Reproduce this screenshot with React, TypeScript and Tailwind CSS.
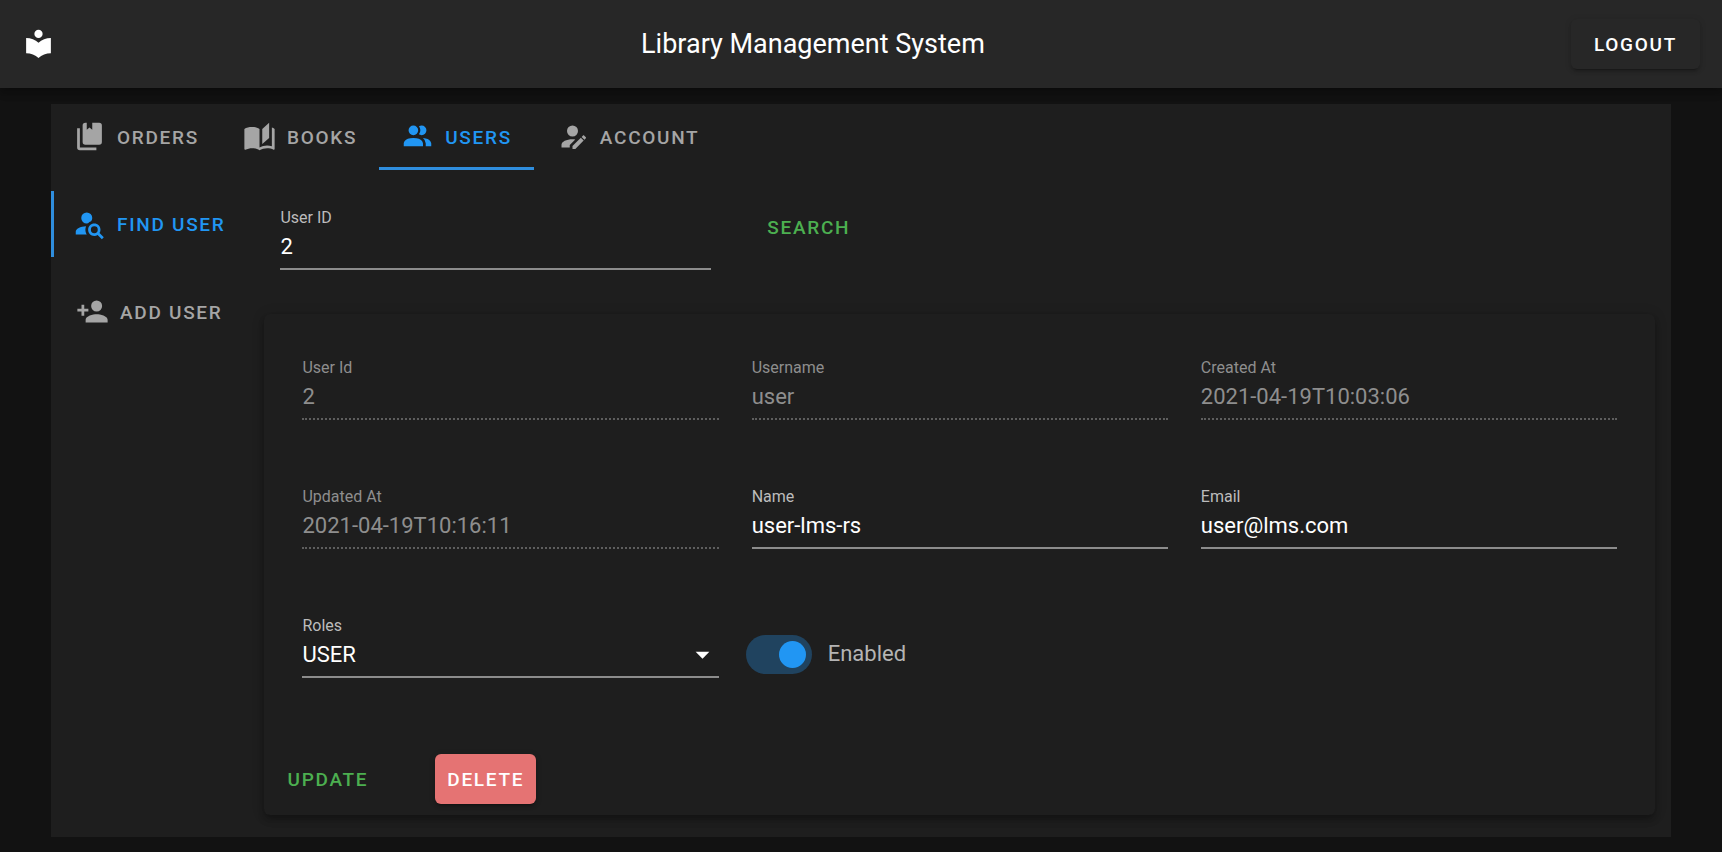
import { useState, type ReactNode } from "react";

const icons = {
  library:
    "M12,8A3,3 0 0,0 15,5A3,3 0 0,0 12,2A3,3 0 0,0 9,5A3,3 0 0,0 12,8M12,11.54C9.64,9.35 6.5,8 3,8V19C6.5,19 9.64,20.35 12,22.54C14.36,20.35 17.5,19 21,19V8C17.5,8 14.36,9.35 12,11.54Z",
  orders:
    "M19,18H9A2,2 0 0,1 7,16V4A2,2 0 0,1 9,2H10V7L12,5.5L14,7V2H19A2,2 0 0,1 21,4V16A2,2 0 0,1 19,18M17,20V22H5A2,2 0 0,1 3,20V6H5V20H17Z",
  books:
    "M19 2L14 6.5V17.5L19 13V2M6.5 5C4.55 5 2.45 5.4 1 6.5V21.16C1 21.41 1.25 21.66 1.5 21.66C1.6 21.66 1.65 21.59 1.75 21.59C3.1 20.94 5.05 20.5 6.5 20.5C8.45 20.5 10.55 20.9 12 22C13.35 21.15 15.8 20.5 17.5 20.5C19.15 20.5 20.85 20.81 22.25 21.56C22.35 21.61 22.4 21.59 22.5 21.59C22.75 21.59 23 21.34 23 21.09V6.5C22.4 6.05 21.75 5.75 21 5.5V19C19.9 18.65 18.7 18.5 17.5 18.5C15.8 18.5 13.35 19.15 12 20V6.5C10.55 5.4 8.45 5 6.5 5Z",
  users:
    "M16 17V19H2V17S2 13 9 13 16 17 16 17M12.5 7.5A3.5 3.5 0 1 0 9 11A3.5 3.5 0 0 0 12.5 7.5M15.94 13A5.32 5.32 0 0 1 18 17V19H22V17S22 13.37 15.94 13M15 4A3.39 3.39 0 0 0 13.07 4.59A5 5 0 0 1 13.07 10.41A3.39 3.39 0 0 0 15 11A3.5 3.5 0 0 0 15 4Z",
  account:
    "M21.7,13.35L20.7,14.35L18.65,12.3L19.65,11.3C19.86,11.09 20.21,11.09 20.42,11.3L21.7,12.58C21.91,12.79 21.91,13.14 21.7,13.35M12,18.94L18.06,12.88L20.11,14.93L14.06,21H12V18.94M12,14C7.58,14 4,15.79 4,18V20H10V18.11L14,14.11C13.34,14.03 12.67,14 12,14M12,4A4,4 0 0,0 8,8A4,4 0 0,0 12,12A4,4 0 0,0 16,8A4,4 0 0,0 12,4Z",
  findUser:
    "M15.5,12C18,12 20,14 20,16.5C20,17.38 19.75,18.21 19.31,18.9L22.39,22L21,23.39L17.88,20.32C17.19,20.75 16.37,21 15.5,21C13,21 11,19 11,16.5C11,14 13,12 15.5,12M15.5,14A2.5,2.5 0 0,0 13,16.5A2.5,2.5 0 0,0 15.5,19A2.5,2.5 0 0,0 18,16.5A2.5,2.5 0 0,0 15.5,14M10,4A4,4 0 0,1 14,8C14,8.91 13.69,9.75 13.18,10.43C12.32,10.75 11.55,11.26 10.91,11.9L10,12A4,4 0 0,1 6,8A4,4 0 0,1 10,4M2,20V18C2,15.88 5.31,14.14 9.5,14C9.18,14.78 9,15.62 9,16.5C9,17.79 9.38,19 10,20H2Z",
  addUser:
    "M15,14C12.33,14 7,15.33 7,18V20H23V18C23,15.33 17.67,14 15,14M6,10V7H4V10H1V12H4V15H6V12H9V10M15,12A4,4 0 0,0 19,8A4,4 0 0,0 15,4A4,4 0 0,0 11,8A4,4 0 0,0 15,12Z",
  caret: "M7,10L12,15L17,10H7Z",
};

type IconName = keyof typeof icons;

function Icon({ name, className = "" }: { name: IconName; className?: string }) {
  return (
    <svg viewBox="0 0 24 24" className={`size-[33px] shrink-0 fill-current ${className}`} aria-hidden="true">
      <path d={icons[name]} />
    </svg>
  );
}

const buttonText = "pt-[2px] text-[19px] font-medium uppercase tracking-[0.09em]";

type TabProps = { icon: IconName; label: string; active: boolean; vertical?: boolean; onSelect: () => void };

function Tab({ icon, label, active, vertical = false, onSelect }: TabProps) {
  return (
    <button
      type="button"
      role="tab"
      aria-selected={active}
      onClick={onSelect}
      className={`relative flex h-[66px] items-center justify-center gap-[11px] px-[22px] ${buttonText} ${
        active ? "text-[#2196f3]" : "text-[#a5a5a5]"
      }`}
    >
      <Icon name={icon} className="mb-1" />
      {label}
      {active && (
        <span
          className={`absolute bottom-0 left-0 bg-[#2f8ede] ${vertical ? "h-full w-[3px]" : "h-[3px] w-full"}`}
        />
      )}
    </button>
  );
}

function FieldShell({ id, label, disabled, children }: { id: string; label: string; disabled?: boolean; children: ReactNode }) {
  return (
    <div className="min-w-0">
      <label htmlFor={id} className={`block text-[16px] leading-6 ${disabled ? "text-[#8e8e8e]" : "text-[#bcbcbc]"}`}>
        {label}
      </label>
      <div
        className={
          disabled
            ? "border-b-2 border-dotted border-[#5e5e5e] pb-[6px] text-[#8e8e8e]"
            : "border-b-2 border-[#8c8c8c] pb-[6px] text-white"
        }
      >
        {children}
      </div>
    </div>
  );
}

type TextFieldProps = { id: string; label: string; value: string; disabled?: boolean };

function TextField({ id, label, value, disabled }: TextFieldProps) {
  return (
    <FieldShell id={id} label={label} disabled={disabled}>
      <input
        id={id}
        defaultValue={value}
        disabled={disabled}
        className="block h-8 w-full bg-transparent text-[22px] outline-none"
      />
    </FieldShell>
  );
}

const sections: { icon: IconName; label: string }[] = [
  { icon: "orders", label: "Orders" },
  { icon: "books", label: "Books" },
  { icon: "users", label: "Users" },
  { icon: "account", label: "Account" },
];

const actions: { icon: IconName; label: string }[] = [
  { icon: "findUser", label: "Find User" },
  { icon: "addUser", label: "Add User" },
];

export default function App() {
  const [section, setSection] = useState("Users");
  const [action, setAction] = useState("Find User");

  return (
    <div className="min-h-screen bg-[#121212] font-[Roboto,sans-serif] text-white">
      <header className="relative flex h-[88px] items-center justify-between bg-[#272727] px-[22px] shadow-[0_3px_6px_-1px_rgba(0,0,0,0.2),0_6px_7px_rgba(0,0,0,0.14),0_1px_14px_rgba(0,0,0,0.12)]">
        <Icon name="library" className="mb-[2px]" />
        <h1 className="text-[27px]">Library Management System</h1>
        <button
          type="button"
          className={`h-[50px] rounded-md bg-[#272727] px-[23px] shadow-[0_4px_1px_-3px_rgba(0,0,0,0.2),0_3px_3px_rgba(0,0,0,0.14),0_1px_7px_rgba(0,0,0,0.12)] ${buttonText}`}
        >
          Logout
        </button>
      </header>

      <main className="mx-[51px] mt-4 bg-[#1e1e1e] pb-[22px]">
        <div role="tablist" className="flex">
          {sections.map((s) => (
            <Tab key={s.label} {...s} active={section === s.label} onSelect={() => setSection(s.label)} />
          ))}
        </div>

        <div className="flex pt-[21px]">
          <div role="tablist" aria-orientation="vertical" className="flex shrink-0 flex-col gap-[22px]">
            {actions.map((a) => (
              <Tab key={a.label} {...a} vertical active={action === a.label} onSelect={() => setAction(a.label)} />
            ))}
          </div>

          <div className="min-w-0 flex-1 pr-4 pl-[17px]">
            <form className="grid grid-cols-3 gap-x-[33px] px-4 pt-[15px]" onSubmit={(e) => e.preventDefault()}>
              <TextField id="search-id" label="User ID" value="2" />
              <div className="flex items-start">
                <button type="submit" className={`-mt-1 h-[50px] rounded-md px-[23px] text-[#4caf50] ${buttonText}`}>
                  Search
                </button>
              </div>
            </form>

            <form
              className="mt-11 rounded-md pt-[42px] shadow-[0_3px_6px_-1px_rgba(0,0,0,0.2),0_6px_7px_rgba(0,0,0,0.14),0_1px_14px_rgba(0,0,0,0.12)]"
              onSubmit={(e) => e.preventDefault()}
            >
              <div className="grid grid-cols-3 gap-x-[33px] gap-y-[65px] px-[38px]">
                <TextField id="user-id" label="User Id" value="2" disabled />
                <TextField id="username" label="Username" value="user" disabled />
                <TextField id="created-at" label="Created At" value="2021-04-19T10:03:06" disabled />
                <TextField id="updated-at" label="Updated At" value="2021-04-19T10:16:11" disabled />
                <TextField id="name" label="Name" value="user-lms-rs" />
                <TextField id="email" label="Email" value="user@lms.com" />
                <FieldShell id="roles" label="Roles">
                  <div className="grid items-center">
                    <select
                      id="roles"
                      defaultValue="USER"
                      className="col-start-1 row-start-1 h-8 w-full appearance-none bg-transparent text-[22px] outline-none"
                    >
                      <option className="bg-[#1e1e1e]">USER</option>
                      <option className="bg-[#1e1e1e]">ADMIN</option>
                    </select>
                    <Icon name="caret" className="pointer-events-none col-start-1 row-start-1 -my-1 justify-self-end" />
                  </div>
                </FieldShell>
                <label className="-ml-[6px] flex items-center gap-4 self-center pt-4 text-[22px] leading-6 text-[#b4b4b4]">
                  <input
                    type="checkbox"
                    role="switch"
                    defaultChecked
                    className="h-[39px] w-[66px] appearance-none rounded-full bg-[#444444] p-[6px] before:block before:size-[27px] before:rounded-full before:bg-[#bdbdbd] checked:bg-[#20435f] checked:before:ml-auto checked:before:bg-[#2196f3]"
                  />
                  Enabled
                </label>
              </div>

              <div className="mt-[76px] flex gap-[55px] px-[11px] pb-[11px]">
                <button type="button" className={`h-[50px] rounded-md px-3 text-[#4caf50] ${buttonText}`}>
                  Update
                </button>
                <button
                  type="button"
                  className={`h-[50px] rounded-md bg-[#e57373] px-3 shadow-[0_4px_1px_-3px_rgba(0,0,0,0.2),0_3px_3px_rgba(0,0,0,0.14),0_1px_7px_rgba(0,0,0,0.12)] ${buttonText}`}
                >
                  Delete
                </button>
              </div>
            </form>
          </div>
        </div>
      </main>
    </div>
  );
}
